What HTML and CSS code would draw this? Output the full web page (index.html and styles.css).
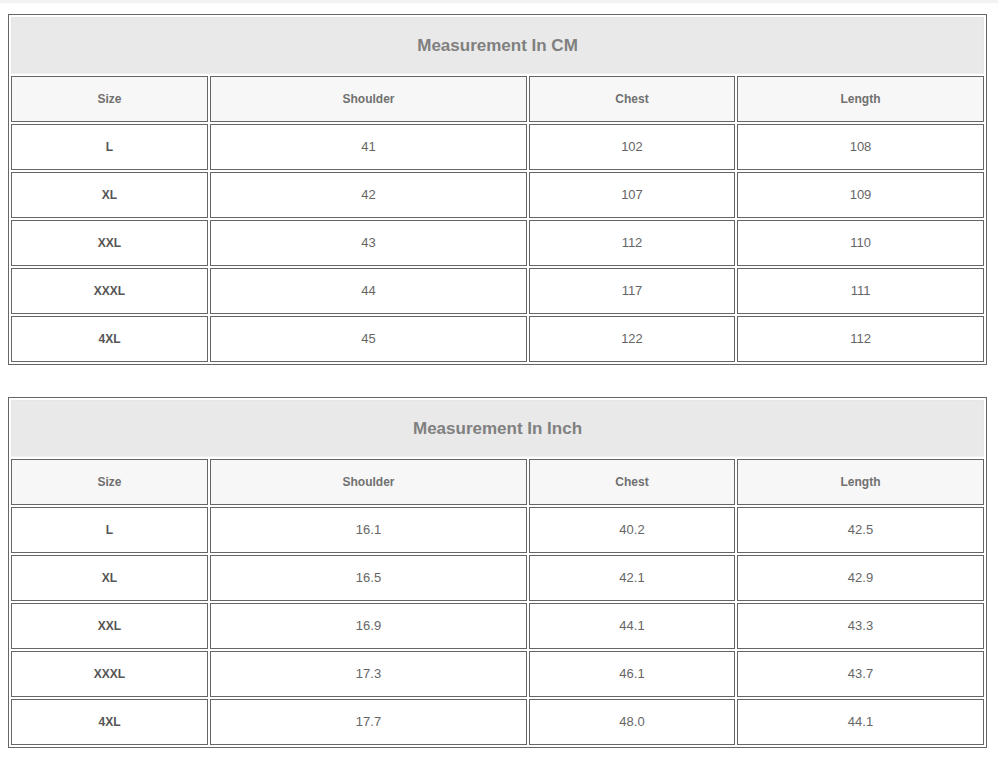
FILE: index.html
```html
<!DOCTYPE html>
<html>
<head>
<meta charset="utf-8">
<link rel="stylesheet" href="styles.css">
</head>
<body>
<div class="topbar"></div>
<table class="size-table first">
  <colgroup><col class="c1"><col class="c2"><col class="c3"><col class="c4"></colgroup>
  <tr class="title-row"><th colspan="4" class="title">Measurement In CM</th></tr>
  <tr class="head"><th>Size</th><th>Shoulder</th><th>Chest</th><th>Length</th></tr>
  <tr><td class="sz">L</td><td>41</td><td>102</td><td>108</td></tr>
  <tr><td class="sz">XL</td><td>42</td><td>107</td><td>109</td></tr>
  <tr><td class="sz">XXL</td><td>43</td><td>112</td><td>110</td></tr>
  <tr><td class="sz">XXXL</td><td>44</td><td>117</td><td>111</td></tr>
  <tr><td class="sz">4XL</td><td>45</td><td>122</td><td>112</td></tr>
</table>
<table class="size-table second">
  <colgroup><col class="c1"><col class="c2"><col class="c3"><col class="c4"></colgroup>
  <tr class="title-row"><th colspan="4" class="title">Measurement In Inch</th></tr>
  <tr class="head"><th>Size</th><th>Shoulder</th><th>Chest</th><th>Length</th></tr>
  <tr><td class="sz">L</td><td>16.1</td><td>40.2</td><td>42.5</td></tr>
  <tr><td class="sz">XL</td><td>16.5</td><td>42.1</td><td>42.9</td></tr>
  <tr><td class="sz">XXL</td><td>16.9</td><td>44.1</td><td>43.3</td></tr>
  <tr><td class="sz">XXXL</td><td>17.3</td><td>46.1</td><td>43.7</td></tr>
  <tr><td class="sz">4XL</td><td>17.7</td><td>48.0</td><td>44.1</td></tr>
</table>
</body>
</html>
```
FILE: styles.css
```css
html, body {
  margin: 0;
  padding: 0;
  background: #ffffff;
}
body {
  padding: 0 8px;
  font-family: "Liberation Sans", Arial, sans-serif;
}
.topbar {
  height: 3px;
  margin: 0 -8px;
  width: 998px;
  background: #f2f2f2;
}
.size-table {
  width: 979px;
  table-layout: fixed;
  border-collapse: separate;
  border-spacing: 2px;
  border: 1px solid #666666;
}
.size-table.first {
  margin-top: 11px;
}
.size-table.second {
  margin-top: 32px;
}
.c1 { width: 197px; }
.c2 { width: 317px; }
.c3 { width: 206px; }
.c4 { width: 247px; }
.size-table th,
.size-table td {
  border: 1px solid #666666;
  padding: 0;
  text-align: center;
  vertical-align: middle;
}
.size-table tr {
  height: 46px;
}
.size-table tr.title-row {
  height: 57px;
}
.size-table th.title {
  background: #e9e9e9;
  border-color: #e6e6e6;
  border-bottom-color: #f0f0f0;
  color: #808080;
  font-size: 17px;
  font-weight: bold;
}
.head th {
  background: #f7f7f7;
  color: #707070;
  font-size: 12px;
  font-weight: bold;
  padding-bottom: 1px;
}
.size-table td {
  color: #666666;
  font-size: 13px;
  padding-bottom: 1px;
}
.size-table td.sz {
  color: #555555;
  font-size: 12px;
  font-weight: bold;
}
```
